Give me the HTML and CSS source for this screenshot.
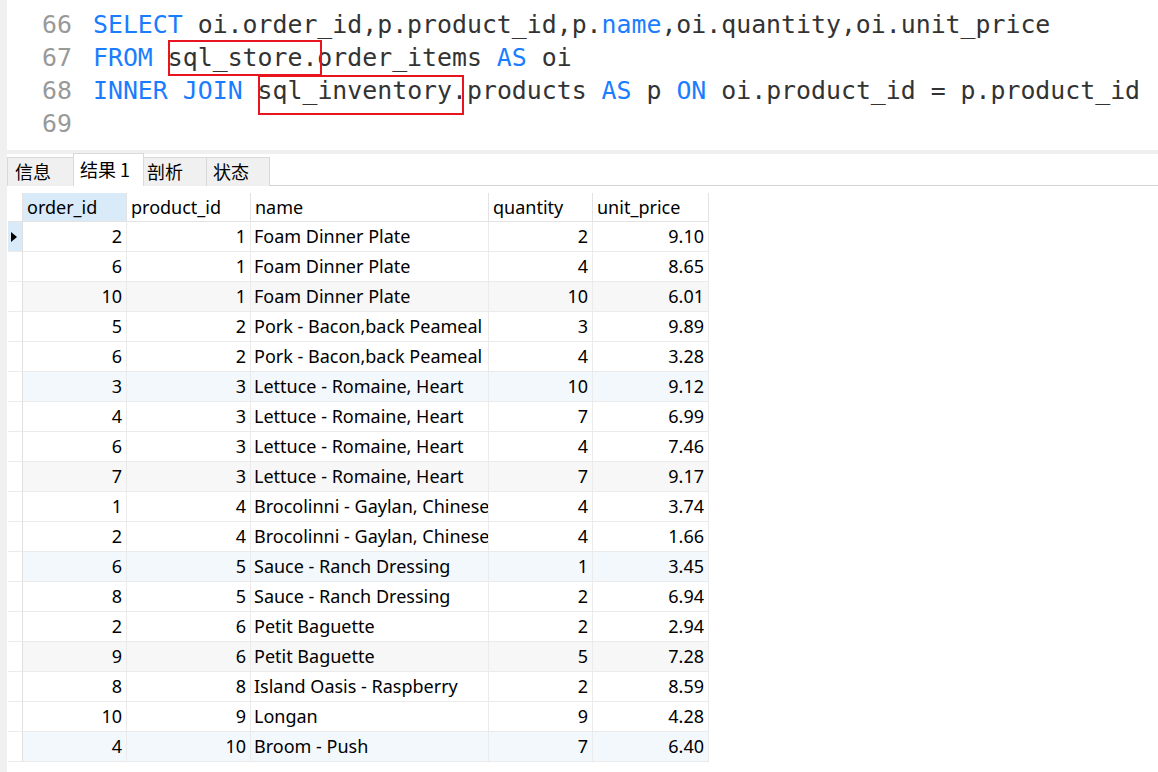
FILE: index.html
```html
<!DOCTYPE html>
<html>
<head>
<meta charset="utf-8">
<link rel="stylesheet" href="styles.css">
</head>
<body>
<div class="app">
  <div class="strip"></div>
  <div class="main">
    <div class="editor">
      <div class="gutter">
        <div>66</div><div>67</div><div>68</div><div>69</div>
      </div>
      <div class="code">
        <div class="ln"><span class="kw">SELECT</span> oi.order_id,p.product_id,p.<span class="kw">name</span>,oi.quantity,oi.unit_price</div>
        <div class="ln"><span class="kw">FROM</span> sql_store.order_items <span class="kw">AS</span> oi</div>
        <div class="ln"><span class="kw">INNER</span> <span class="kw">JOIN</span> sql_inventory.products <span class="kw">AS</span> p <span class="kw">ON</span> oi.product_id = p.product_id</div>
        <div class="ln">&nbsp;</div>
      </div>
      <div class="mark mark1"></div>
      <div class="mark mark2"></div>
    </div>
    <div class="band"></div>
    <div class="tabs">
      <div class="tab t1">信息</div>
      <div class="tab active">结果 1</div>
      <div class="tab t3">剖析</div>
      <div class="tab t4">状态</div>
    </div>
    <div class="gridwrap">
      <div class="grid">
        <div class="hc ind"></div>
        <div class="hc sel">order_id</div>
        <div class="hc">product_id</div>
        <div class="hc">name</div>
        <div class="hc">quantity</div>
        <div class="hc">unit_price</div>
      </div>
      <div id="rows"></div>
    </div>
  </div>
</div>
<script src="script.js"></script>
</body>
</html>
```
FILE: script.js
```js
const data = [
  [2,1,"Foam Dinner Plate",2,"9.10"],
  [6,1,"Foam Dinner Plate",4,"8.65"],
  [10,1,"Foam Dinner Plate",10,"6.01"],
  [5,2,"Pork - Bacon,back Peameal",3,"9.89"],
  [6,2,"Pork - Bacon,back Peameal",4,"3.28"],
  [3,3,"Lettuce - Romaine, Heart",10,"9.12"],
  [4,3,"Lettuce - Romaine, Heart",7,"6.99"],
  [6,3,"Lettuce - Romaine, Heart",4,"7.46"],
  [7,3,"Lettuce - Romaine, Heart",7,"9.17"],
  [1,4,"Brocolinni - Gaylan, Chinese",4,"3.74"],
  [2,4,"Brocolinni - Gaylan, Chinese",4,"1.66"],
  [6,5,"Sauce - Ranch Dressing",1,"3.45"],
  [8,5,"Sauce - Ranch Dressing",2,"6.94"],
  [2,6,"Petit Baguette",2,"2.94"],
  [9,6,"Petit Baguette",5,"7.28"],
  [8,8,"Island Oasis - Raspberry",2,"8.59"],
  [10,9,"Longan",9,"4.28"],
  [4,10,"Broom - Push",7,"6.40"]
];
const rows = document.getElementById('rows');
data.forEach((r, i) => {
  const row = document.createElement('div');
  let cls = 'grid row';
  if (i % 6 === 2) cls += ' gray';
  if (i % 6 === 5) cls += ' blue';
  row.className = cls;
  const ind = document.createElement('div');
  ind.className = 'c ind' + (i === 0 ? ' cur' : '');
  if (i === 0) ind.innerHTML = '<span class="tri"></span>';
  row.appendChild(ind);
  r.forEach((v, j) => {
    const c = document.createElement('div');
    c.className = 'c' + (j === 2 ? ' txt' : ' num');
    c.textContent = v;
    row.appendChild(c);
  });
  rows.appendChild(row);
});
```
FILE: styles.css
```css
html, body {
  margin: 0;
  padding: 0;
  background: #ffffff;
}
.app {
  display: flex;
  width: 1158px;
  height: 772px;
  overflow: hidden;
}
.strip {
  width: 7px;
  flex: none;
  background: #f0f0f0;
}
.main {
  flex: 1;
  display: flex;
  flex-direction: column;
}
.editor {
  position: relative;
  height: 150px;
  flex: none;
  display: flex;
  background: #ffffff;
  font-family: "DejaVu Sans Mono", monospace;
  font-size: 24.85px;
  line-height: 33px;
  box-sizing: border-box;
  padding-top: 8px;
}
.gutter {
  width: 65px;
  text-align: right;
  color: #999999;
  flex: none;
}
.code {
  margin-left: 21px;
  color: #333333;
}
.ln {
  white-space: pre;
  height: 33px;
}
.kw {
  color: #1a7dff;
}
.mark {
  position: absolute;
  border: 2px solid #e8141e;
  box-sizing: border-box;
}
.mark1 {
  left: 161px;
  top: 40px;
  width: 154px;
  height: 36px;
}
.mark2 {
  left: 251px;
  top: 75px;
  width: 206px;
  height: 40px;
}
.band {
  height: 4px;
  flex: none;
  background: #f0f0f0;
}
.tabs {
  height: 31px;
  flex: none;
  display: flex;
  align-items: flex-end;
  border-bottom: 1px solid #d4d4d4;
  font-family: "Noto Sans CJK SC", "Noto Sans", sans-serif;
  font-size: 18px;
  color: #000;
}
.tab {
  box-sizing: border-box;
  border: 1px solid #d9d9d9;
  border-bottom: none;
  background: #f0f0f0;
  padding: 0 0 0 7px;
  line-height: 27px;
  margin-right: -1px;
  margin-bottom: -1px;
  height: 29px;
}
.t1 { width: 67px; }
.t3 { width: 64px; padding-left: 3px; }
.t4 { width: 64px; padding-left: 6px; }
.tab.active {
  background: #ffffff;
  height: 33px;
  line-height: 31px;
  width: 71px;
  padding-left: 6px;
  position: relative;
}
.gridwrap {
  margin-top: 7px;
  margin-left: 1px;
  font-family: "Noto Sans", sans-serif;
  font-size: 18px;
  color: #000;
}
.grid {
  display: grid;
  grid-template-columns: 15px 104px 124px 238px 104px 116px;
  width: 701px;
}
.hc {
  height: 29px;
  line-height: 28px;
  box-sizing: border-box;
  border-right: 1px solid #e3e3e3;
  border-bottom: 1px solid #e3e3e3;
  padding-left: 4px;
  white-space: nowrap;
  overflow: hidden;
}
.hc.ind {
  padding: 0;
}
.hc.sel {
  background: #d9eaf8;
}
.c {
  height: 30px;
  line-height: 29px;
  box-sizing: border-box;
  border-right: 1px solid #ebebeb;
  border-bottom: 1px solid #ebebeb;
  white-space: nowrap;
  overflow: hidden;
}
.row.gray .c:not(.ind) {
  background: #f7f7f7;
}
.row.blue .c:not(.ind) {
  background: #f3f8fd;
}
.c.ind {
  border-right: 1px solid #e0e0e0;
  display: flex;
  align-items: center;
  justify-content: center;
}
.c.ind.cur {
  background: #d9eaf8;
}
.tri {
  width: 0;
  height: 0;
  border-top: 5px solid transparent;
  border-bottom: 5px solid transparent;
  border-left: 6px solid #000;
  margin-left: -2px;
}
.num {
  text-align: right;
  padding-right: 4px;
}
.txt {
  padding-left: 3px;
}
```
